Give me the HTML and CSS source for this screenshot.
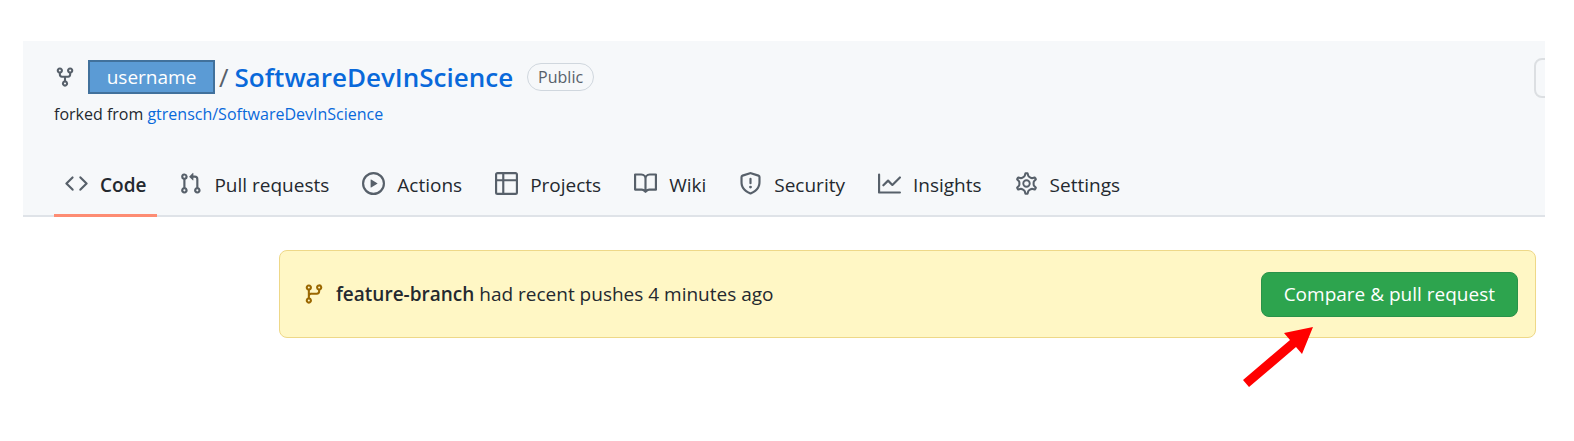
FILE: index.html
```html
<!DOCTYPE html>
<html lang="en">
<head>
<meta charset="utf-8">
<title>SoftwareDevInScience</title>
<link rel="stylesheet" href="styles.css">
</head>
<body>
<header class="repo-header">
  <div class="repo-top">
    <div class="repo-id">
      <div class="title-row">
        <svg class="icon fork-icon" viewBox="0 0 16 16" aria-hidden="true"><path fill-rule="evenodd" d="M5 3.25a.75.75 0 11-1.5 0 .75.75 0 011.5 0zm0 2.122a2.25 2.25 0 10-1.5 0v.878A2.25 2.25 0 005.75 8.5h1.5v2.128a2.251 2.251 0 101.5 0V8.5h1.5a2.25 2.25 0 002.25-2.25v-.878a2.25 2.25 0 10-1.5 0v.878a.75.75 0 01-.75.75h-4.5A.75.75 0 015 6.25v-.878zm3.75 7.378a.75.75 0 11-1.5 0 .75.75 0 011.5 0zm3-8.75a.75.75 0 100-1.5.75.75 0 000 1.5z"/></svg>
        <span class="owner">username</span>
        <span class="slash">/</span>
        <a class="repo-name" href="#">SoftwareDevInScience</a>
        <span class="label">Public</span>
      </div>
      <p class="forked">forked from <a href="#">gtrensch/SoftwareDevInScience</a></p>
    </div>
    <button class="clipped-button" type="button" aria-label="Watch"></button>
  </div>
  <nav class="tabs" aria-label="Repository">
    <a class="tab selected" href="#"><svg class="icon" viewBox="0 0 16 16"><path d="M4.72 3.22a.75.75 0 011.06 1.06L2.06 8l3.72 3.72a.75.75 0 11-1.06 1.06L.47 8.53a.75.75 0 010-1.06l4.25-4.25zm6.56 0a.75.75 0 10-1.06 1.06L13.94 8l-3.72 3.72a.75.75 0 101.06 1.06l4.25-4.25a.75.75 0 000-1.06l-4.25-4.25z"/></svg>Code</a>
    <a class="tab" href="#"><svg class="icon" viewBox="0 0 16 16"><path fill-rule="evenodd" d="M7.177 3.073L9.573.677A.25.25 0 0110 .854v4.792a.25.25 0 01-.427.177L7.177 3.427a.25.25 0 010-.354zM3.75 2.5a.75.75 0 100 1.5.75.75 0 000-1.5zm-2.25.75a2.25 2.25 0 113 2.122v5.256a2.251 2.251 0 11-1.5 0V5.372A2.25 2.25 0 011.5 3.25zM11 2.5h-1V4h1a1 1 0 011 1v5.628a2.251 2.251 0 101.5 0V5A2.5 2.5 0 0011 2.5zm1 10.25a.75.75 0 111.5 0 .75.75 0 01-1.5 0zM3.75 12a.75.75 0 100 1.5.75.75 0 000-1.5z"/></svg>Pull requests</a>
    <a class="tab" href="#"><svg class="icon" viewBox="0 0 16 16"><path fill-rule="evenodd" d="M1.5 8a6.5 6.5 0 1113 0 6.5 6.5 0 01-13 0zM8 0a8 8 0 100 16A8 8 0 008 0zM6.379 5.227A.25.25 0 006 5.442v5.117a.25.25 0 00.379.214l4.264-2.559a.25.25 0 000-.428L6.379 5.227z"/></svg>Actions</a>
    <a class="tab" href="#"><svg class="icon" viewBox="0 0 16 16"><path fill-rule="evenodd" d="M0 1.75C0 .784.784 0 1.75 0h12.5C15.216 0 16 .784 16 1.75v12.5A1.75 1.75 0 0114.25 16H1.75A1.75 1.75 0 010 14.25V1.75zM1.5 6.5v7.75c0 .138.112.25.25.25H5v-8H1.5zM5 5H1.5V1.75a.25.25 0 01.25-.25H5V5zm1.5 1.5v8h7.75a.25.25 0 00.25-.25V6.5h-8zm8-1.5h-8V1.5h7.75a.25.25 0 01.25.25V5z"/></svg>Projects</a>
    <a class="tab" href="#"><svg class="icon" viewBox="0 0 16 16"><path fill-rule="evenodd" d="M0 1.75A.75.75 0 01.75 1h4.253c1.227 0 2.317.59 3 1.501A3.744 3.744 0 0111.006 1h4.245a.75.75 0 01.75.75v10.5a.75.75 0 01-.75.75h-4.507a2.25 2.25 0 00-1.591.659l-.622.621a.75.75 0 01-1.06 0l-.622-.621A2.25 2.25 0 005.258 13H.75a.75.75 0 01-.75-.75V1.75zm8.755 3a2.25 2.25 0 012.25-2.25H14.5v9h-3.757c-.71 0-1.4.201-1.992.572l.004-7.322zm-1.504 7.324l.004-5.073-.002-2.253A2.25 2.25 0 005.003 2.5H1.5v9h3.757a3.75 3.75 0 011.994.574z"/></svg>Wiki</a>
    <a class="tab" href="#"><svg class="icon" viewBox="0 0 16 16"><path fill-rule="evenodd" d="M7.467.133a1.75 1.75 0 011.066 0l5.25 1.68A1.75 1.75 0 0115 3.48V7c0 1.566-.32 3.182-1.303 4.682-.983 1.498-2.585 2.813-5.032 3.855a1.7 1.7 0 01-1.33 0c-2.447-1.042-4.049-2.357-5.032-3.855C1.32 10.182 1 8.566 1 7V3.48a1.75 1.75 0 011.217-1.667l5.25-1.68zm.61 1.429a.25.25 0 00-.153 0l-5.25 1.68a.25.25 0 00-.174.238V7c0 1.358.275 2.666 1.057 3.86.784 1.194 2.121 2.34 4.366 3.297a.2.2 0 00.154 0c2.245-.956 3.582-2.104 4.366-3.298C13.225 9.666 13.5 8.36 13.5 7V3.48a.25.25 0 00-.174-.237l-5.25-1.68zM9 10.5a1 1 0 11-2 0 1 1 0 012 0zm-.25-5.75a.75.75 0 10-1.5 0v3a.75.75 0 001.5 0v-3z"/></svg>Security</a>
    <a class="tab" href="#"><svg class="icon" viewBox="0 0 16 16"><path d="M1.5 1.75a.75.75 0 00-1.5 0v12.5c0 .414.336.75.75.75h14.5a.75.75 0 000-1.5H1.5V1.75zm14.28 2.53a.75.75 0 00-1.06-1.06L10 7.94 7.53 5.47a.75.75 0 00-1.06 0L3.22 8.72a.75.75 0 001.06 1.06L7 7.06l2.47 2.47a.75.75 0 001.06 0l5.25-5.25z"/></svg>Insights</a>
    <a class="tab" href="#"><svg class="icon gear" viewBox="0 0 16 16"><path transform="translate(-.8 -.8) scale(1.1)" d="M7.429 1.525a6.593 6.593 0 011.142 0c.036.003.108.036.137.146l.289 1.105c.147.56.55.967.997 1.189.174.086.341.183.501.29.417.278.97.423 1.53.27l1.102-.303c.11-.03.175.016.195.046.219.31.41.641.573.989.014.031.022.11-.059.19l-.815.806c-.411.406-.562.957-.53 1.456a4.588 4.588 0 010 .582c-.032.499.119 1.05.53 1.456l.815.806c.08.08.073.159.059.19a6.494 6.494 0 01-.573.99c-.02.029-.086.074-.195.045l-1.103-.303c-.559-.153-1.112-.008-1.529.27-.16.107-.327.204-.5.29-.449.222-.851.628-.998 1.189l-.289 1.105c-.029.11-.101.143-.137.146a6.613 6.613 0 01-1.142 0c-.036-.003-.108-.037-.137-.146l-.289-1.105c-.147-.56-.55-.967-.997-1.189a4.502 4.502 0 01-.501-.29c-.417-.278-.97-.423-1.53-.27l-1.102.303c-.11.03-.175-.016-.195-.046a6.492 6.492 0 01-.573-.989c-.014-.031-.022-.11.059-.19l.815-.806c.411-.406.562-.957.53-1.456a4.587 4.587 0 010-.582c.032-.499-.119-1.05-.53-1.456l-.815-.806c-.08-.08-.073-.159-.059-.19a6.44 6.44 0 01.573-.99c.02-.029.086-.075.195-.045l1.103.303c.559.153 1.112.008 1.529-.27.16-.107.327-.204.5-.29.449-.222.851-.628.998-1.189l.289-1.105c.029-.11.101-.143.137-.146z"/><circle cx="8" cy="8" r="2.25"/></svg>Settings</a>
  </nav>
</header>
<main class="content">
  <section class="notice">
    <svg class="icon branch-icon" viewBox="0 0 16 16" aria-hidden="true"><path fill-rule="evenodd" d="M11.75 2.5a.75.75 0 100 1.5.75.75 0 000-1.5zm-2.25.75a2.25 2.25 0 113 2.122V6A2.5 2.5 0 0110 8.5H6a1 1 0 00-1 1v1.128a2.251 2.251 0 11-1.5 0V5.372a2.25 2.25 0 111.5 0v1.836A2.492 2.492 0 016 7h4a1 1 0 001-1v-.628A2.25 2.25 0 019.5 3.25zM4.25 12a.75.75 0 100 1.5.75.75 0 000-1.5zM3.5 3.25a.75.75 0 111.5 0 .75.75 0 01-1.5 0z"/></svg>
    <p class="notice-text"><strong>feature-branch</strong> had recent pushes 4 minutes ago</p>
    <div class="action">
      <button class="compare" type="button">Compare &amp; pull request</button>
      <svg class="arrow" viewBox="0 0 72 62" aria-hidden="true"><path d="M71 1L42 7l6 7L1 54l6 7 47-40 6 7z"/></svg>
    </div>
  </section>
</main>
</body>
</html>
```
FILE: styles.css
```css
* { box-sizing: border-box; }
body {
  min-height: 100vh;
  margin: 0;
  padding: 41px 29px 0 23px;
  background: #fff;
  color: #24292f;
  font-family: "Segoe UI", "Open Sans", "Noto Sans", sans-serif;
  font-size: 19px;
  line-height: 28px;
}
p { margin: 0; }
a { color: #0969da; text-decoration: none; }
.icon { width: 23px; height: 23px; flex: none; fill: #57606a; }
.repo-header { background: #f6f8fa; }
.repo-top {
  display: flex;
  justify-content: space-between;
  overflow: hidden;
  padding: 17px 0 0 31px;
}
.title-row { display: flex; align-items: center; height: 38px; white-space: nowrap; }
.title-row .icon, .branch-icon { width: 22px; height: 22px; }
.owner {
  width: 127px;
  margin-left: 12px;
  border: 2px solid #41719c;
  background: #5b9bd5;
  color: #fff;
  line-height: 30px;
  text-align: center;
}
.slash { margin: 0 6px 0 4px; font-size: 26px; color: #57606a; }
.repo-name { font-size: 26px; font-weight: 600; }
.label {
  margin-left: 14px;
  padding: 0 10px;
  border: 1px solid #d0d7de;
  border-radius: 14px;
  color: #57606a;
  font-size: 16px;
  line-height: 26px;
}
.forked { margin-top: 4px; font-size: 16px; }
.clipped-button {
  width: 60px;
  height: 40px;
  margin-right: -49px;
  border: 2px solid #dcdfe2;
  border-radius: 8px;
  background: #f6f8fa;
}
.tabs {
  display: flex;
  gap: 11px;
  padding: 39px 0 0 31px;
  border-bottom: 2px solid #dfe3e8;
  white-space: nowrap;
}
.tab {
  display: flex;
  gap: 12px;
  height: 50px;
  margin-bottom: -2px;
  padding: 0 11px;
  border-bottom: 3px solid transparent;
  color: #24292f;
  line-height: 36px;
}
.tab .icon { margin-top: 5px; }
.tab .gear { fill: none; stroke: #57606a; stroke-width: 1.3; }
.tab.selected { border-color: #fd8c73; font-weight: 600; }
.content { padding: 33px 9px 0 256px; }
.notice {
  display: flex;
  align-items: center;
  height: 88px;
  padding: 0 17px 0 23px;
  border: 1px solid #eed888;
  border-radius: 8px;
  background: #fff7c5;
}
.branch-icon { fill: #9a6700; }
.notice-text { margin-left: 11px; flex: 1; }
.notice-text strong { font-weight: 600; }
.action { position: relative; }
.compare {
  height: 45px;
  padding: 0 22px;
  border: 1px solid #2a924a;
  border-radius: 8px;
  background: #2da44e;
  color: #fff;
  font: inherit;
}
.arrow { position: absolute; top: 54px; left: -19px; width: 72px; height: 62px; fill: #f00; }
```
